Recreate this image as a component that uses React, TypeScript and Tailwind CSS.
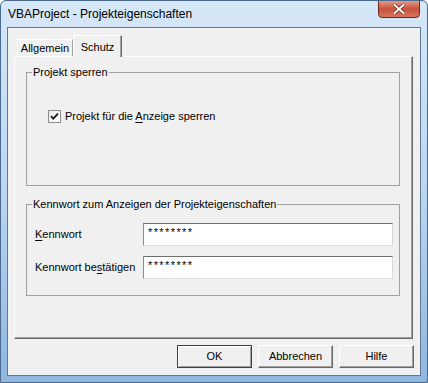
import React from 'react';

const ui = { fontFamily: '"Liberation Sans", Arial, sans-serif' };

function GroupBox({ title, className, children }: { title: string; className?: string; children?: React.ReactNode }) {
  return (
    <fieldset className={`border border-[#a0a0a0] ${className ?? ''}`}>
      <legend className="ml-[5px] px-[1px] text-[11px] leading-[13px] text-black">{title}</legend>
      {children}
    </fieldset>
  );
}

function PasswordField() {
  return (
    <div className="w-[250px] h-[23px] bg-white border border-t-[#6f6f6f] border-l-[#8a8a8a] border-r-[#d8d8d8] border-b-[#e0e0e0] pl-[4px] pt-[3px] text-[11px] leading-none tracking-[1.4px] text-black">
      ********
    </div>
  );
}

function Btn({ label, isDefault }: { label: string; isDefault?: boolean }) {
  return (
    <button
      className={`w-[75px] h-[23px] bg-[#f0f0f0] text-[11px] text-black ${
        isDefault
          ? 'border border-[#404040] shadow-[inset_1px_1px_0_#fff,inset_-1px_-1px_0_#a0a0a0]'
          : 'border border-t-white border-l-white border-r-[#696969] border-b-[#696969] shadow-[inset_-1px_-1px_0_#a0a0a0]'
      }`}
    >
      {label}
    </button>
  );
}

export default function App() {
  return (
    <div
      style={ui}
      className="relative w-[428px] h-[383px] overflow-hidden rounded-t-[6px] border border-[#4a6b8f] bg-gradient-to-b from-[#d6e7f7] via-[#bcd6ef] to-[#8fb6df]"
    >
      {/* title bar */}
      <div className="h-[26px] flex items-center pl-[7px] text-[12px] text-black">
        VBAProject - Projekteigenschaften
      </div>
      <div className="absolute top-[-1px] right-[7px] w-[42px] h-[18px] rounded-b-[4px] border border-[#6b2a24] bg-gradient-to-b from-[#e49a86] via-[#c8503c] to-[#d8765f] flex items-center justify-center">
        <svg width="12" height="10" viewBox="0 0 12 10">
          <path d="M1.5 1 L10.5 9 M10.5 1 L1.5 9" stroke="#5a1a14" strokeWidth="3.2" strokeLinecap="square" />
          <path d="M1.5 1 L10.5 9 M10.5 1 L1.5 9" stroke="#ffffff" strokeWidth="2" strokeLinecap="square" />
        </svg>
      </div>

      {/* client area */}
      <div className="ml-[6px] w-[414px] h-[349px] border border-[#5f7a96] bg-[#f0f0f0] flex flex-col text-black">
        {/* tabs */}
        <div className="h-[28px] flex items-end pl-[9px]">
          <div className="w-[56px] h-[17px] border border-b-0 border-t-white border-l-white border-r-[#a0a0a0] flex items-center justify-center text-[11px]">
            Allgemein
          </div>
          <div className="relative z-10 w-[49px] h-[22px] -mb-[1px] border border-b-0 border-t-white border-l-white border-r-[#696969] bg-[#f0f0f0] shadow-[inset_-1px_0_0_#a0a0a0] flex items-start justify-center pt-[3px] text-[11px]">
            Schutz
          </div>
        </div>

        {/* panel */}
        <div className="ml-[6px] w-[399px] h-[283px] border border-t-white border-l-white border-r-[#696969] border-b-[#696969] shadow-[inset_-1px_-1px_0_#a0a0a0] pl-[11px] pt-[9px]">
          <GroupBox title="Projekt sperren" className="w-[374px] h-[120px]">
            <label className="flex items-center ml-[21px] mt-[29px] text-[11px]">
              <span className="w-[13px] h-[13px] border border-[#8e8f8f] bg-gradient-to-br from-[#e8e8e8] to-[#ffffff] flex items-center justify-center">
                <svg width="9" height="9" viewBox="0 0 9 9">
                  <path d="M1 4.2 L3.3 6.6 L8 1.6" stroke="#1a1a1a" strokeWidth="1.8" fill="none" />
                </svg>
              </span>
              <span className="ml-[4px] whitespace-nowrap">
                Projekt für die <span className="underline underline-offset-2">A</span>nzeige sperren
              </span>
            </label>
          </GroupBox>

          <GroupBox title="Kennwort zum Anzeigen der Projekteigenschaften" className="w-[374px] h-[98px] mt-[12px]">
            <div className="flex flex-col gap-[10px] pt-[12px] pl-[8px]">
              <div className="flex items-center">
                <span className="w-[108px] whitespace-nowrap text-[11px]">
                  <span className="underline underline-offset-2">K</span>ennwort
                </span>
                <PasswordField />
              </div>
              <div className="flex items-center">
                <span className="w-[108px] whitespace-nowrap text-[11px]">
                  Kennwort be<span className="underline underline-offset-2">s</span>tätigen
                </span>
                <PasswordField />
              </div>
            </div>
          </GroupBox>
        </div>

        {/* buttons */}
        <div className="flex justify-end gap-[6px] pr-[6px] pt-[6px]">
          <Btn label="OK" isDefault />
          <Btn label="Abbrechen" />
          <Btn label="Hilfe" />
        </div>
      </div>
    </div>
  );
}
